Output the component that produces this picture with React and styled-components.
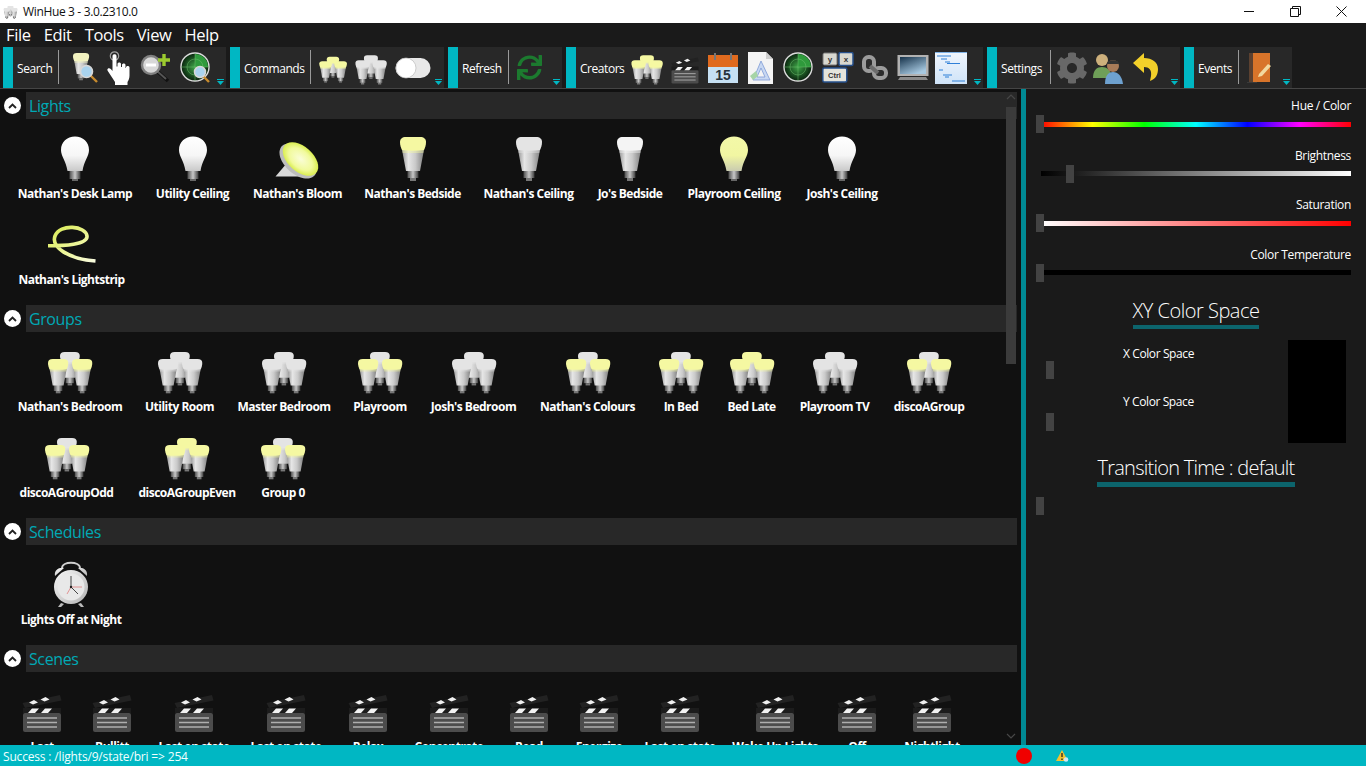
import React from "react";
import styled, { createGlobalStyle } from "styled-components";
import { FaCog, FaSync } from "react-icons/fa";

const GlobalStyle = createGlobalStyle`
  html, body {
    margin: 0;
    padding: 0;
    background: #1a1a1a;
    overflow: hidden;
  }
  * {
    box-sizing: border-box;
  }
  body {
    font-family: "Open Sans", "Noto Sans", sans-serif;
    font-size: 12px;
    color: #fff;
  }
`;

const Page = styled.div`
  width: 1366px;
  height: 766px;
  display: flex;
  flex-direction: column;
  overflow: hidden;
`;

/* title bar */
const TitleBar = styled.div`
  height: 23px;
  background: #fff;
  color: #111;
  display: flex;
  align-items: center;
  padding: 0 2px 0 3px;
`;
const TitleText = styled.span`
  margin-left: 5px;
  font-size: 12px;
  letter-spacing: -0.35px;
  flex: 1;
`;
const WinButton = styled.div`
  width: 46px;
  height: 23px;
  display: flex;
  align-items: center;
  justify-content: center;
`;

/* menu */
const Menu = styled.div`
  height: 24px;
  background: #1a1a1a;
  display: flex;
  align-items: center;
  padding-left: 6px;
  gap: 13px;
`;
const MenuItem = styled.span`
  font-size: 16.5px;
  letter-spacing: -0.35px;
  line-height: 24px;
`;

/* ribbon */
const Ribbon = styled.div`
  height: 42px;
  background: #1a1a1a;
  border-bottom: 1px solid #454545;
  display: flex;
  padding-left: 3px;
  gap: 4px;
`;
const RibbonGroup = styled.div`
  position: relative;
  width: ${(p) => p.$w}px;
  height: 41px;
  background: #282828;
  display: flex;
  align-items: stretch;
`;
const GroupStrip = styled.div`
  width: 10px;
  background: #00b7c3;
`;
const GroupLabel = styled.div`
  width: ${(p) => p.$w}px;
  padding: 1px 0 0 4px;
  display: flex;
  align-items: center;
  font-size: 12px;
  letter-spacing: -0.45px;
  white-space: nowrap;
`;
const GroupSep = styled.div`
  width: 1px;
  height: 34px;
  margin-top: 3px;
  background: #9a9a9a;
`;
const ToolRow = styled.div`
  display: flex;
  align-items: center;
  padding-left: ${(p) => p.$pad || 0}px;
`;
const ToolCell = styled.div`
  width: ${(p) => p.$w}px;
  display: flex;
  justify-content: center;
  align-items: center;
`;
const OverflowMark = styled.svg`
  position: absolute;
  right: 2px;
  bottom: 3px;
`;

/* main */
const Main = styled.div`
  flex: 1;
  display: flex;
  min-height: 0;
`;
const Content = styled.div`
  position: relative;
  width: 1021px;
  background: #111;
  padding: 3px 4px 0 0;
  overflow: hidden;
`;
const Section = styled.section`
  margin-bottom: 14px;
`;
const SectionHead = styled.div`
  height: 27px;
  display: flex;
  align-items: center;
  padding-left: 4px;
`;
const Collapse = styled.div`
  width: 17px;
  height: 17px;
  border-radius: 50%;
  background: #fff;
  display: flex;
  align-items: center;
  justify-content: center;
  margin-right: 5px;
`;
const SectionBar = styled.div`
  flex: 1;
  height: 27px;
  background: #282828;
  color: #00a9b5;
  font-size: 16px;
  letter-spacing: -0.4px;
  line-height: 29px;
  padding-left: 3px;
`;
const ItemList = styled.div`
  display: flex;
  flex-wrap: wrap;
  gap: 14px 22px;
  padding: 14px 10px 0 18px;
`;
const Item = styled.div`
  width: ${(p) => p.$w}px;
  height: 72px;
  display: flex;
  flex-direction: column;
  align-items: center;
`;
const ItemLabel = styled.div`
  margin-top: 5px;
  font-size: 12px;
  font-weight: 700;
  line-height: 16px;
  letter-spacing: -0.5px;
  white-space: nowrap;
`;
const ScrollThumb = styled.div`
  position: absolute;
  top: 18px;
  right: 5px;
  width: 10px;
  height: 257px;
  background: #3b3b3b;
`;
const ScrollArrow = styled.svg`
  position: absolute;
  right: 5px;
  ${(p) => (p.$down ? "bottom: 6px;" : "top: 5px;")}
`;

const Splitter = styled.div`
  width: 5px;
  background: #008a94;
`;

/* right panel */
const Panel = styled.div`
  flex: 1;
  background: #1a1a1a;
  padding-top: 8px;
  display: flex;
  flex-direction: column;
`;
const SliderRow = styled.div`
  height: 49.67px;
  padding: 0 15px 0 10px;
`;
const SliderLabel = styled.div`
  text-align: right;
  padding-top: 1px;
  line-height: 16px;
  height: 18px;
  letter-spacing: -0.33px;
`;
const SliderBody = styled.div`
  position: relative;
  height: 18px;
  display: flex;
  align-items: center;
  padding-left: 5px;
`;
const Track = styled.div`
  flex: 1;
  height: 5px;
  background: ${(p) => p.$fill};
`;
const Thumb = styled.div`
  position: absolute;
  top: 0;
  width: 8px;
  height: 18px;
  background: #434343;
`;
const PanelHeading = styled.div`
  align-self: center;
  font-weight: 300;
  font-size: ${(p) => p.$size}px;
  line-height: 28px;
  padding-top: ${(p) => p.$top}px;
  letter-spacing: ${(p) => p.$track}px;
  white-space: nowrap;
  border-bottom: ${(p) => p.$rule}px solid #0c646c;
`;
const XYBlock = styled.div`
  display: flex;
  margin-top: 11px;
  padding: 0 20px;
  justify-content: space-between;
`;
const XYFields = styled.div`
  display: flex;
  flex-direction: column;
`;
const XYLabel = styled.div`
  padding: ${(p) => p.$top}px 0 0 77px;
  line-height: 16px;
  font-size: 12px;
  letter-spacing: -0.4px;
`;
const XYThumb = styled.div`
  width: 8px;
  height: 18px;
  margin-top: ${(p) => p.$top}px;
  background: #434343;
`;
const XYSwatch = styled.div`
  width: 58px;
  height: 103px;
  background: #000;
`;
const TransitionThumb = styled.div`
  width: 8px;
  height: 18px;
  margin: 10px 0 0 10px;
  background: #434343;
`;

/* status */
const StatusBar = styled.div`
  height: 21px;
  background: #00b7c3;
  display: flex;
  align-items: center;
  padding-left: 3px;
`;
const StatusText = styled.div`
  width: 1013px;
  padding-top: 2px;
  color: #f2ffff;
  letter-spacing: -0.17px;
`;
const RedDot = styled.div`
  width: 16px;
  height: 16px;
  border-radius: 50%;
  background: #f00000;
`;
const WarnIcon = styled.svg`
  margin-left: 24px;
`;

const Defs = styled.svg`
  display: block;
  width: 0;
  height: 0;
`;

const GradientDefs = () => (
  <Defs aria-hidden="true">
    <defs>
      <linearGradient id="brBody" x1="0" x2="1" y1="0" y2="0">
        <stop offset="0" stopColor="#8e8e8e" />
        <stop offset="0.3" stopColor="#e6e6e6" />
        <stop offset="0.6" stopColor="#cacaca" />
        <stop offset="1" stopColor="#7d7d7d" />
      </linearGradient>
      <linearGradient id="screw" x1="0" x2="1" y1="0" y2="0">
        <stop offset="0" stopColor="#4c4c4c" />
        <stop offset="0.5" stopColor="#c8c8c8" />
        <stop offset="1" stopColor="#3c3c3c" />
      </linearGradient>
      <linearGradient id="a19" x1="0" x2="0" y1="0" y2="1">
        <stop offset="0" stopColor="#fff" />
        <stop offset="0.55" stopColor="#f6f6f6" />
        <stop offset="1" stopColor="#c9c9c9" />
      </linearGradient>
      <linearGradient id="a19y" x1="0" x2="0" y1="0" y2="1">
        <stop offset="0" stopColor="#f3f8a8" />
        <stop offset="0.55" stopColor="#f1f6a2" />
        <stop offset="1" stopColor="#c9cbb0" />
      </linearGradient>
      <radialGradient id="bloom" cx="0.5" cy="0.5" r="0.55">
        <stop offset="0" stopColor="#fafdd8" />
        <stop offset="0.6" stopColor="#f1fa9c" />
        <stop offset="1" stopColor="#d3ea38" />
      </radialGradient>
      <linearGradient id="strip" x1="0" x2="1" y1="0" y2="1">
        <stop offset="0" stopColor="#d8ea50" />
        <stop offset="0.6" stopColor="#eff7a0" />
        <stop offset="1" stopColor="#f8fbe0" />
      </linearGradient>
      <radialGradient id="radar" cx="0.5" cy="0.5" r="0.5">
        <stop offset="0" stopColor="#3fa648" />
        <stop offset="0.8" stopColor="#123c18" />
        <stop offset="1" stopColor="#0c2410" />
      </radialGradient>
      <linearGradient id="screen" x1="0" x2="0.6" y1="0" y2="1">
        <stop offset="0" stopColor="#16324a" />
        <stop offset="1" stopColor="#a6c8e0" />
      </linearGradient>
      <linearGradient id="silver" x1="0" x2="1" y1="0" y2="1">
        <stop offset="0" stopColor="#f6f6f6" />
        <stop offset="1" stopColor="#b4b4b4" />
      </linearGradient>
      <linearGradient id="codeBg" x1="0" x2="0" y1="0" y2="1">
        <stop offset="0" stopColor="#f0f6fd" />
        <stop offset="1" stopColor="#cfe3f8" />
      </linearGradient>
    </defs>
  </Defs>
);

const CREAM = "#f5f8a2";
const PALE = "#e4e4e4";

/* one BR30 bulb drawn in a 26x44 box */
const Br = ({ x = 0, y = 0, s = 1, cap = CREAM }) => (
  <g transform={`translate(${x} ${y}) scale(${s})`}>
    <path d="M7.500 33h11v8h-11z" fill="url(#screw)" />
    <path d="M10 41h6v3h-6z" fill="#777" />
    <path d="M1.500 10h23L20 34H6z" fill="url(#brBody)" />
    <path d="M2 12h22l-.7 4H2.700z" fill={cap} opacity="0.45" />
    <path d="M6 0h14c4 0 6 2 6 5 0 3-1 6-2 8-7 1-15 1-22 0C1 11 0 8 0 5c0-3 2-5 6-5z" fill={cap} />
  </g>
);

const A19 = ({ cap = "url(#a19)" }) => (
  <svg width="48" height="48" viewBox="0 0 48 48">
    <path d="M18.500 38h11v8h-11z" fill="url(#screw)" />
    <path d="M21 46h6v2h-6z" fill="#666" />
    <path d="M24 3.500c8 0 14 5.500 14 13.500 0 6-5 11-6.500 21h-15C15 28 10 23 10 17c0-8 6-13.500 14-13.500z" fill={cap} />
  </svg>
);

const BrBulb = ({ cap }) => (
  <svg width="48" height="48" viewBox="0 0 48 48">
    <Br x={11} y={4} cap={cap} />
  </svg>
);

const Trio = ({ back = PALE, front = CREAM, size = 48 }) => (
  <svg width={size} height={size} viewBox="0 0 48 48">
    <Br x={14} y={6} s={0.76} cap={back} />
    <Br x={2} y={13} s={0.78} cap={front} />
    <Br x={26} y={13} s={0.78} cap={front} />
  </svg>
);

const Bloom = () => (
  <svg width="48" height="48" viewBox="0 0 48 48">
    <path d="M13 30 1.500 43.500h26L24 38z" fill="#d8d8d8" />
    <ellipse cx="24" cy="28" rx="22" ry="13" transform="rotate(42 24 28)" fill="#bdbdbd" />
    <ellipse cx="26.500" cy="26" rx="21" ry="12.500" transform="rotate(42 26.500 26)" fill="url(#bloom)" />
  </svg>
);

const Strip = () => (
  <svg width="48" height="48" viewBox="0 0 48 48">
    <path d="M0 26.700C15 26.700 40 26 39 17 38 7 12 4 7 17c-4 11 13 23 40.500 25" fill="none" stroke="url(#strip)" strokeWidth="3.600" />
  </svg>
);

const Clapper = ({ size = 48 }) => (
  <svg width={size} height={size} viewBox="0 0 48 48">
    <rect x="5" y="27" width="38" height="19" rx="2" fill="#4c4c4c" />
    <path d="M9 32h30M9 36.500h30M9 41h30" stroke="#aeaeae" strokeWidth="1.300" />
    <path d="M5 22h38v5H5z" fill="#1c1c1c" />
    <path d="M10 27l4-4.500h7l-4 4.500zM23 27l4-4.500h7l-4 4.500z" fill="#f2f2f2" />
    <path d="M4.500 17 42 9l1.500 5.500L7 22z" fill="#222" />
    <path d="M11 16.500l5-2.500 4 2.500-5 2zM22.500 13.500l5-2.500 4 2.500-5 2z" fill="#f0f0f0" />
  </svg>
);

const Clock = () => (
  <svg width="48" height="48" viewBox="0 0 48 48">
    <path d="M15 9c0-7 18-7 18 0" fill="none" stroke="#cfcfcf" strokeWidth="1.800" />
    <path d="M8 17c-1-6 4-9 9-8zM40 17c1-6-4-9-9-8z" fill="url(#silver)" />
    <path d="M14 44l-3 4h3l3-3zM34 44l3 4h-3l-3-3z" fill="#bbb" />
    <circle cx="24" cy="28" r="17" fill="url(#silver)" />
    <circle cx="24" cy="28" r="13.500" fill="#e8e8e8" />
    <path d="M24 28V17M24 28l7 7" stroke="#333" strokeWidth="0.900" />
    <path d="M24 28h11M24 28l-4 7" stroke="#e08a8a" strokeWidth="0.900" />
    <circle cx="24" cy="28" r="1.200" fill="#222" />
  </svg>
);

const BulbSearch = () => (
  <svg width="30" height="32" viewBox="0 0 30 32">
    <Br x={3} y={1} s={0.62} cap="#f2f2c0" />
    <path d="M20 23l7 7" stroke="#c78b2e" strokeWidth="2.400" />
    <circle cx="16.500" cy="19.500" r="6" fill="#a9d3ee" stroke="#d8d8d8" strokeWidth="1.600" />
  </svg>
);

const PointHand = () => (
  <svg width="24" height="34" viewBox="0 0 24 34">
    <circle cx="7.500" cy="5" r="4.200" fill="none" stroke="#a0a0a0" strokeWidth="1.200" />
    <path d="M5.500 5c0-2.500 4-2.500 4 0v10.500h1V13c0-2 3.500-2 3.500 0v3h1v-2c0-2 3.500-2 3.500 0v3h.5v-.5c0-2 3.500-2 3.500 0v8c0 3-1 5-2 6.500v3H8v-3L.8 20c-1.500-2 1-4 3-2l1.700 2z" fill="#fff" />
  </svg>
);

const ZoomPlus = () => (
  <svg width="32" height="32" viewBox="0 0 32 32">
    <path d="M17 19l11 10" stroke="#111" strokeWidth="3.600" />
    <path d="M17 19l9 8" stroke="#555" strokeWidth="2" />
    <circle cx="11" cy="13" r="9" fill="#d8d8d8" stroke="#808080" strokeWidth="2.400" />
    <path d="M6 13h10" stroke="#fff" strokeWidth="3" />
    <path d="M24 2v12M18 8h12" stroke="#9ccb2f" strokeWidth="3.400" />
  </svg>
);

const Radar = ({ lens }) => (
  <svg width="32" height="32" viewBox="0 0 32 32">
    <circle cx="15" cy="15" r="14" fill="url(#radar)" stroke="#dcdcdc" strokeWidth="1.400" />
    <path d="M15 15 15 2A13 13 0 0 1 28 15z" fill="#2f9a3c" />
    <path d="M15 1v28M1 15h28" stroke="#6fbf6f" strokeWidth="0.500" />
    <circle cx="15" cy="15" r="8" fill="none" stroke="#6fbf6f" strokeWidth="0.500" />
    {lens && (
      <>
        <path d="M23 24l6 6" stroke="#c78b2e" strokeWidth="2.400" />
        <circle cx="20" cy="20" r="5.500" fill="#a9d3ee" stroke="#d8d8d8" strokeWidth="1.500" />
      </>
    )}
  </svg>
);

const Toggle = () => (
  <svg width="36" height="22" viewBox="0 0 36 22">
    <rect x="0.500" y="1" width="35" height="20" rx="10" fill="#e8e8e8" />
    <circle cx="11" cy="11" r="10" fill="#fff" stroke="#bbb" strokeWidth="0.700" />
  </svg>
);

const Calendar = () => (
  <svg width="30" height="30" viewBox="0 0 30 30">
    <rect x="0" y="2" width="30" height="28" fill="#c6e0f3" />
    <rect x="0" y="2" width="30" height="12" fill="#e06a1e" />
    <path d="M7 0v7M23 0v7" stroke="#777" strokeWidth="2" />
    <text x="15" y="27" textAnchor="middle" fontSize="14" fontWeight="700" fill="#26333d" fontFamily="Liberation Sans">15</text>
  </svg>
);

const DocTriangle = () => (
  <svg width="27" height="32" viewBox="0 0 27 32">
    <path d="M1 0h18l7 7v25H1z" fill="#f4f4f4" />
    <path d="M19 0v7h7z" fill="#cfcfcf" />
    <path d="M14 9l9 19H6zM14 16l-4 9h8z" fill="#c8d8f2" fillRule="evenodd" stroke="#7d9bd6" strokeWidth="0.800" />
    <path d="M3 24l6-5 2 5-5 4z" fill="#a6d4a6" />
  </svg>
);

const Keys = () => (
  <svg width="32" height="31" viewBox="0 0 32 31">
    <rect x="1" y="1" width="14" height="12" rx="1.500" fill="#d8d8d0" stroke="#777" />
    <text x="8" y="10" textAnchor="middle" fontSize="8" fontWeight="700" fill="#333" fontFamily="Liberation Sans">y</text>
    <rect x="17" y="0.500" width="14" height="13" rx="1.500" fill="#d8d8d0" stroke="#26508c" strokeWidth="1.500" />
    <text x="24" y="10" textAnchor="middle" fontSize="8" fontWeight="700" fill="#333" fontFamily="Liberation Sans">x</text>
    <rect x="0.800" y="16" width="24" height="14" rx="1.500" fill="#e4e4dc" stroke="#26508c" strokeWidth="1.500" />
    <text x="12.500" y="26" textAnchor="middle" fontSize="7.500" fontWeight="700" fill="#333" fontFamily="Liberation Sans">Ctrl</text>
  </svg>
);

const ChainLink = () => (
  <svg width="26" height="26" viewBox="0 0 26 26">
    <rect x="2" y="2" width="10" height="14" rx="4.500" fill="#2c2c2c" stroke="#9c9c9c" strokeWidth="4" />
    <rect x="12" y="13" width="12" height="10" rx="4.500" fill="#2c2c2c" stroke="#9c9c9c" strokeWidth="4" />
    <path d="M8 11l8 7" stroke="#6c6c6c" strokeWidth="4" />
  </svg>
);

const Monitor = () => (
  <svg width="32" height="28" viewBox="0 0 32 28">
    <rect x="0.500" y="1" width="31" height="21" fill="#b2b2b2" />
    <rect x="3" y="3" width="26" height="17" fill="url(#screen)" />
    <path d="M3 23h26l2 3H1z" fill="#8a8a8a" />
  </svg>
);

const CodeDoc = () => (
  <svg width="32" height="32" viewBox="0 0 32 32">
    <rect width="32" height="32" fill="url(#codeBg)" />
    <path d="M2 4h14M6 7h6M10 10h5M12 11.500h13M4 18h4M8 23h9M10 25h4M17 29h13" stroke="#2f80d8" strokeWidth="1.200" />
    <path d="M0 .5h32" stroke="#7fb2e6" />
  </svg>
);

const Users = () => (
  <svg width="32" height="32" viewBox="0 0 32 32">
    <circle cx="9" cy="8" r="6" fill="#cdb07c" />
    <path d="M0 26c0-8 4-11 9-11s8 3 9 7v4z" fill="#6f9f58" />
    <circle cx="20" cy="14" r="6" fill="#a87b58" />
    <path d="M14 12c0-5 12-5 12 0z" fill="#333" />
    <path d="M12 32c0-8 3-12 8-12s9 4 10 12z" fill="#6ea1cf" />
  </svg>
);

const UndoArrow = () => (
  <svg width="25" height="29" viewBox="0 0 25 29">
    <path d="M11 0 0 10l11 10v-6c5 0 8 3 7 9l-1 5c6-2 8-7 8-12 0-7-6-11-14-11z" fill="#f3d02a" />
  </svg>
);

const BookPencil = () => (
  <svg width="26" height="30" viewBox="0 0 26 30">
    <rect x="2" y="0" width="4" height="29" fill="#5c4130" />
    <rect x="6" y="0" width="17" height="29" fill="#d8742a" />
    <path d="M12 21l9-10 3 2-9 10-4 1z" fill="#f2d9a0" />
    <path d="M0 29h10v1H0z" fill="#3a3a3a" />
  </svg>
);

const ExpandChevron = () => (
  <svg width="9" height="6" viewBox="0 0 9 6">
    <path d="M1 5l3.500-3.500L8 5" fill="none" stroke="#222" strokeWidth="1.800" />
  </svg>
);

const Overflow = () => (
  <OverflowMark width="7" height="6" viewBox="0 0 7 6">
    <path d="M0 .5h7" stroke="#00b7c3" />
    <path d="M0 2h7L3.500 6z" fill="#00b7c3" />
  </OverflowMark>
);

const HUE = "linear-gradient(90deg,#f00,#ff0 16.6%,#0f0 33.3%,#0ff 50%,#00f 66.6%,#f0f 83.3%,#f00)";

const sliders = [
  { label: "Hue / Color", fill: HUE, left: 0 },
  { label: "Brightness", fill: "linear-gradient(90deg,#000,#fff)", left: 30 },
  { label: "Saturation", fill: "linear-gradient(90deg,#fff,#f00)", left: 0 },
  { label: "Color Temperature", fill: "#000", left: 0 },
];

const ribbon = [
  {
    label: "Search", w: 223, lw: 45, sep: true, pad: 7,
    tools: [[37, <BulbSearch />], [32, <PointHand />], [42, <ZoomPlus />], [37, <Radar lens />]],
  },
  {
    label: "Commands", w: 214, lw: 70, sep: true, pad: 7,
    tools: [[30, <Trio back={CREAM} size={34} />], [46, <Trio back={PALE} front={PALE} size={34} />], [38, <Toggle />]],
  },
  { label: "Refresh", w: 114, lw: 50, sep: true, pad: 6, tools: [[29, <FaSync size={25} color="#1c7a2f" />]] },
  {
    label: "Creators", w: 417, lw: 52, pad: 0,
    tools: [
      [38, <Trio back={CREAM} size={34} />], [38, <Clapper size={34} />], [38, <Calendar />], [36, <DocTriangle />],
      [42, <Radar />], [35, <Keys />], [40, <ChainLink />], [36, <Monitor />], [40, <CodeDoc />],
    ],
  },
  {
    label: "Settings", w: 193, lw: 53, sep: true, pad: 3,
    tools: [[35, <FaCog size={32} color="#686868" />], [39, <Users />], [35, <UndoArrow />]],
  },
  { label: "Events", w: 108, lw: 44, sep: true, pad: 3, tools: [[35, <BookPencil />]] },
];

const ON = { front: CREAM, back: PALE };
const OFF = { front: PALE, back: PALE };
const ALL = { front: CREAM, back: CREAM };

const sections = [
  {
    title: "Lights",
    items: [
      ["Nathan's Desk Lamp", 114, <A19 />],
      ["Utility Ceiling", 77, <A19 />],
      ["Nathan's Bloom", 89, <Bloom />],
      ["Nathan's Bedside", 97, <BrBulb cap={CREAM} />],
      ["Nathan's Ceiling", 91, <BrBulb cap={PALE} />],
      ["Jo's Bedside", 68, <BrBulb cap="#f4f4f4" />],
      ["Playroom Ceiling", 96, <A19 cap="url(#a19y)" />],
      ["Josh's Ceiling", 76, <A19 />],
      ["Nathan's Lightstrip", 107, <Strip />],
    ],
  },
  {
    title: "Groups",
    items: [
      ["Nathan's Bedroom", 104, <Trio {...ON} />],
      ["Utility Room", 71, <Trio {...OFF} />],
      ["Master Bedroom", 94, <Trio {...OFF} />],
      ["Playroom", 54, <Trio {...ON} />],
      ["Josh's Bedroom", 89, <Trio {...OFF} />],
      ["Nathan's Colours", 95, <Trio {...ON} />],
      ["In Bed", 48, <Trio {...ON} />],
      ["Bed Late", 49, <Trio {...ALL} />],
      ["Playroom TV", 73, <Trio {...OFF} />],
      ["discoAGroup", 72, <Trio {...ON} />],
      ["discoAGroupOdd", 97, <Trio {...ON} />],
      ["discoAGroupEven", 100, <Trio {...ALL} />],
      ["Group 0", 48, <Trio {...ON} />],
    ],
  },
  { title: "Schedules", items: [["Lights Off at Night", 106, <Clock />]] },
  {
    title: "Scenes",
    items: [
      ["Last", 48], ["Bullitt", 48], ["Last on state", 72], ["Last on state", 68], ["Relax", 52], ["Concentrate", 66],
      ["Read", 50], ["Energize", 46], ["Last on state", 72], ["Wake Up Lights", 74], ["Off", 46], ["Nightlight", 60],
    ].map(([name, w]) => [name, w, <Clapper />]),
  },
];

const RibbonGroups = () =>
  ribbon.map((group) => (
    <RibbonGroup key={group.label} $w={group.w}>
      <GroupStrip />
      <GroupLabel $w={group.lw}>{group.label}</GroupLabel>
      {group.sep && <GroupSep />}
      <ToolRow $pad={group.pad}>
        {group.tools.map(([w, icon], i) => (
          <ToolCell key={i} $w={w}>
            {icon}
          </ToolCell>
        ))}
      </ToolRow>
      <Overflow />
    </RibbonGroup>
  ));

const App = () => (
  <Page>
    <GlobalStyle />
    <GradientDefs />
    <TitleBar>
      <Trio back={PALE} front={PALE} size={15} />
      <TitleText>WinHue 3 - 3.0.2310.0</TitleText>
      <WinButton>
        <svg width="11" height="11" viewBox="0 0 11 11">
          <path d="M0 5.500h10" stroke="#111" />
        </svg>
      </WinButton>
      <WinButton>
        <svg width="11" height="11" viewBox="0 0 11 11">
          <path d="M.5 2.500h8v8h-8zM2.500 2.500v-2h8v8h-2" fill="none" stroke="#111" />
        </svg>
      </WinButton>
      <WinButton>
        <svg width="11" height="11" viewBox="0 0 11 11">
          <path d="M.5.500l10 10M10.500.500l-10 10" stroke="#111" />
        </svg>
      </WinButton>
    </TitleBar>

    <Menu>
      {["File", "Edit", "Tools", "View", "Help"].map((m) => (
        <MenuItem key={m}>{m}</MenuItem>
      ))}
    </Menu>

    <Ribbon>
      <RibbonGroups />
    </Ribbon>

    <Main>
      <Content>
        {sections.map((section) => (
          <Section key={section.title}>
            <SectionHead>
              <Collapse>
                <ExpandChevron />
              </Collapse>
              <SectionBar>{section.title}</SectionBar>
            </SectionHead>
            <ItemList>
              {section.items.map(([name, w, icon], i) => (
                <Item key={i} $w={w}>
                  {icon}
                  <ItemLabel>{name}</ItemLabel>
                </Item>
              ))}
            </ItemList>
          </Section>
        ))}
        <ScrollArrow width="10" height="6" viewBox="0 0 10 6">
          <path d="M1 5l4-4 4 4" fill="none" stroke="#474747" strokeWidth="1.200" />
        </ScrollArrow>
        <ScrollThumb />
        <ScrollArrow $down width="10" height="6" viewBox="0 0 10 6">
          <path d="M1 1l4 4 4-4" fill="none" stroke="#474747" strokeWidth="1.200" />
        </ScrollArrow>
      </Content>
      <Splitter />
      <Panel>
        {sliders.map((s) => (
          <SliderRow key={s.label}>
            <SliderLabel>{s.label}</SliderLabel>
            <SliderBody>
              <Track $fill={s.fill} />
              <Thumb style={{ left: s.left }} />
            </SliderBody>
          </SliderRow>
        ))}
        <PanelHeading $size={20} $top={1} $rule={4} $track={-0.5}>XY Color Space</PanelHeading>
        <XYBlock>
          <XYFields>
            <XYLabel $top={6}>X Color Space</XYLabel>
            <XYThumb $top={-1} />
            <XYLabel $top={15}>Y Color Space</XYLabel>
            <XYThumb $top={3} />
          </XYFields>
          <XYSwatch />
        </XYBlock>
        <PanelHeading $size={20} $top={11} $rule={5} $track={-0.75}>Transition Time : default</PanelHeading>
        <TransitionThumb />
      </Panel>
    </Main>

    <StatusBar>
      <StatusText>Success : /lights/9/state/bri =&gt; 254</StatusText>
      <RedDot />
      <WarnIcon width="13" height="12" viewBox="0 0 13 12">
        <path d="M6 0l6 11H0z" fill="#f2c230" />
        <path d="M6 3v4M6 8.500v1.500" stroke="#222" strokeWidth="1.300" />
        <circle cx="10" cy="9.500" r="2.300" fill="#cfe6f5" />
      </WarnIcon>
    </StatusBar>
  </Page>
);

export default App;
